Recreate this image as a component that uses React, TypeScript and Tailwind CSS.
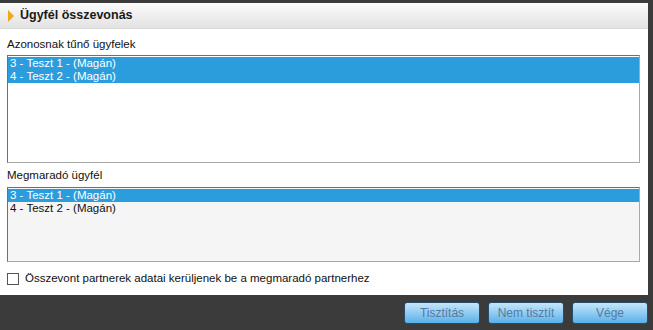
const rows = ["3 - Teszt 1 - (Magán)", "4 - Teszt 2 - (Magán)"];

export default function App() {
  return (
    <div className="flex h-[330px] w-[653px] flex-col bg-[#3b3b3b] pt-[3px] pr-[5px] font-['Liberation_Sans',Arial,sans-serif] text-[11.5px] text-[#111]">
      {/* Dialog panel */}
      <div className="flex h-[292px] flex-col bg-white">
        <div className="flex h-[26px] items-center gap-[6px] border-b border-[#d8d8d8] bg-gradient-to-b from-[#fbfbfb] to-[#e2e2e2] pl-[8px]">
          <svg width="6" height="12" viewBox="0 0 6 12">
            <path d="M0 0 L6 6 L0 12 Z" fill="#f0a818" />
          </svg>
          <span className="text-[12.5px] font-bold text-[#1a1a1a]">Ügyfél összevonás</span>
        </div>

        <div className="flex flex-col px-[7px] pr-[8px]">
          <div className="mt-[6px] h-[18px] leading-[18px]">Azonosnak tűnő ügyfelek</div>
          <div className="mt-[2px] h-[108px] border border-[#a8a8a8] border-t-[#707070] border-l-[#707070] bg-white pt-[1px]">
            {rows.map((r) => (
              <div key={r} className="h-[13px] bg-[#2b9ddc] pl-[2px] leading-[13px] text-white">
                {r}
              </div>
            ))}
          </div>

          <div className="mt-[3px] h-[18px] leading-[18px]">Megmaradó ügyfél</div>
          <div className="mt-[3px] h-[75px] border border-[#a8a8a8] border-t-[#707070] border-l-[#707070] bg-[#f5f5f5] pt-[1px]">
            <div className="h-[13px] bg-[#2b9ddc] pl-[2px] leading-[13px] text-white">{rows[0]}</div>
            <div className="h-[13px] pl-[2px] leading-[13px]">{rows[1]}</div>
          </div>

          <label className="mt-[10px] flex h-[14px] items-center gap-[6px]">
            <span className="h-[12px] w-[12px] border border-[#555] bg-white" />
            <span>Összevont partnerek adatai kerüljenek be a megmaradó partnerhez</span>
          </label>
        </div>
      </div>

      {/* Buttons */}
      <div className="mt-[7px] flex justify-end gap-[8px]">
        {["Tisztítás", "Nem tisztít", "Vége"].map((b) => (
          <div
            key={b}
            className="flex h-[22px] w-[76px] items-center justify-center rounded-[3px] border border-[#2a4a66] bg-gradient-to-b from-[#c4e6fb] to-[#58b0ea] text-[12px] text-[#557a9c]"
          >
            {b}
          </div>
        ))}
      </div>
    </div>
  );
}
